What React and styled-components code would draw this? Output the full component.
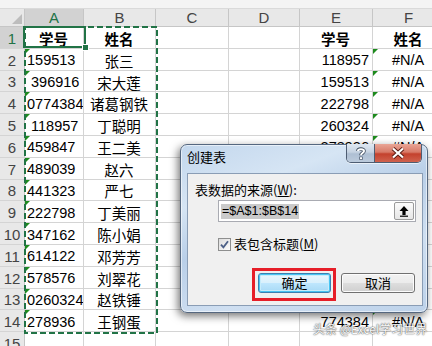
import React from "react";
import styled, { createGlobalStyle, css } from "styled-components";

const GlobalStyle = createGlobalStyle`
  html, body {
    margin: 0;
    padding: 0;
    background: #fff;
  }
  body {
    width: 432px;
    height: 346px;
    overflow: hidden;
    font-family: "Liberation Sans", "Noto Sans CJK SC", sans-serif;
  }
`;

const Page = styled.div`
  position: relative;
  width: 432px;
  height: 346px;
  overflow: hidden;
  background: #fff;
`;

const TopStrip = styled.div`
  height: 9px;
  background: #f4f4f4;
  border-bottom: 1px solid #dadada;
  box-sizing: border-box;
`;

const Sheet = styled.div`
  display: grid;
  grid-template-columns: 25px 59px 72px 73px 71px 73px 72px;
  grid-template-rows: 18px repeat(15, 21.8px);
  width: 445px;
`;

const Corner = styled.div`
  position: relative;
  background: #e8e8e8;
  border-right: 1px solid #c6c6c6;
  border-bottom: 1px solid #c6c6c6;
  &::after {
    content: "";
    position: absolute;
    right: 2px;
    bottom: 2px;
    border-left: 10px solid transparent;
    border-bottom: 10px solid #bdbdbd;
  }
`;

const ColHead = styled.div`
  display: flex;
  align-items: center;
  justify-content: center;
  box-sizing: border-box;
  font-size: 15px;
  background: ${(p) => (p.$active ? "#d2d2d2" : "#e8e8e8")};
  color: ${(p) => (p.$active ? "#217346" : "#444")};
  border-right: 1px solid #c6c6c6;
  border-bottom: 1px solid #c6c6c6;
`;

const RowHead = styled.div`
  display: flex;
  align-items: center;
  justify-content: center;
  box-sizing: border-box;
  font-size: 15px;
  padding-top: 2px;
  background: ${(p) => (p.$active ? "#d2d2d2" : "#e8e8e8")};
  color: ${(p) => (p.$active ? "#217346" : "#444")};
  border-right: 1px solid #c6c6c6;
  border-bottom: 1px solid #d4d4d4;
`;

const Cell = styled.div`
  position: relative;
  display: flex;
  align-items: center;
  box-sizing: border-box;
  padding: 2px 3px 0 2px;
  white-space: pre;
  overflow: hidden;
  font-size: 14.5px;
  color: #000;
  border-right: 1px solid #d4d4d4;
  border-bottom: 1px solid #d4d4d4;
  justify-content: ${(p) =>
    p.$align === "right" ? "flex-end" : p.$align === "center" ? "center" : "flex-start"};
  font-weight: ${(p) => (p.$bold ? 700 : 400)};
  ${(p) =>
    p.$flag &&
    css`
      &::before {
        content: "";
        position: absolute;
        top: 0;
        left: 0;
        border-top: 5px solid #1d8a1d;
        border-right: 5px solid transparent;
      }
    `}
`;

const Marquee = styled.svg`
  position: absolute;
  left: 24px;
  top: 26px;
  width: 134px;
  height: 308px;
`;

const ActiveCell = styled.div`
  position: absolute;
  left: 23px;
  top: 26px;
  width: 63px;
  height: 22px;
  box-sizing: border-box;
  border: 2px solid #217346;
  &::after {
    content: "";
    position: absolute;
    right: -5px;
    bottom: -5px;
    width: 5px;
    height: 5px;
    background: #217346;
    border: 1px solid #fff;
  }
`;

/* ---- dialog ---- */

const Dialog = styled.div`
  position: absolute;
  left: 180px;
  top: 144px;
  width: 248px;
  height: 169px;
  box-sizing: border-box;
  border: 1px solid #55677f;
  border-radius: 7px;
  background: linear-gradient(
    160deg,
    #c3d7ed 0%,
    #d6e5f4 25%,
    #b9cfe8 45%,
    #cfdff1 70%,
    #bdd2ea 100%
  );
  box-shadow: inset 0 0 0 1px rgba(255, 255, 255, 0.55),
    -2px 3px 8px rgba(0, 0, 0, 0.55);
  display: flex;
  flex-direction: column;
  font-family: "Noto Sans CJK SC", "Liberation Sans", sans-serif;
`;

const TitleBar = styled.div`
  height: 28px;
  display: flex;
  justify-content: space-between;
  align-items: flex-start;
  padding: 0 5px 0 6px;
`;

const Title = styled.div`
  margin-top: 3px;
  font-size: 13px;
  line-height: 18px;
  color: #000;
`;

const CaptionButtons = styled.div`
  display: flex;
  margin-top: -1px;
  border: 1px solid #4e5d72;
  border-top: none;
  border-radius: 0 0 5px 5px;
  overflow: hidden;
  box-shadow: 0 1px 0 rgba(255, 255, 255, 0.6);
`;

const CaptionButton = styled.div`
  height: 18px;
  width: ${(p) => (p.$close ? "47px" : "27px")};
  display: flex;
  align-items: center;
  justify-content: center;
  box-sizing: border-box;
  border-left: ${(p) => (p.$close ? "1px solid #4e5d72" : "none")};
  background: ${(p) =>
    p.$close
      ? "linear-gradient(#e9a596 0%, #d87a68 45%, #c4412d 55%, #d0624e 100%)"
      : "linear-gradient(#dfe8f2 0%, #c6d3e2 45%, #aebfd3 55%, #bccbdc 100%)"};
`;

const Client = styled.div`
  height: 133px;
  margin: 0 4px 0 6px;
  box-sizing: border-box;
  border: 1px solid #8a9db5;
  background: #f0f0f0;
  padding: 0 6px 0 7px;
  font-size: 13px;
  color: #000;
`;

const FieldLabel = styled.div`
  margin-top: 7px;
  line-height: 18px;
`;

const Key = styled.span`
  text-decoration: underline;
`;

const RefInput = styled.div`
  margin: 1px 0 0 23px;
  width: 198px;
  height: 22px;
  box-sizing: border-box;
  border: 1px solid #a9abb2;
  background: #fff;
  display: flex;
  align-items: center;
  justify-content: space-between;
  padding: 0 1px 0 2px;
`;

const Selected = styled.span`
  background: #cacaca;
  font-family: "Liberation Sans", sans-serif;
  font-size: 12.5px;
  line-height: 15px;
  padding: 0 1px;
  color: #000;
`;

const CollapseButton = styled.div`
  width: 20px;
  height: 18px;
  box-sizing: border-box;
  border: 1px solid #9a9a9a;
  border-radius: 2px;
  background: linear-gradient(#fbfbfb, #e6e6e6);
  display: flex;
  align-items: center;
  justify-content: center;
`;

const CheckRow = styled.div`
  margin: 13px 0 0 23px;
  height: 18px;
  display: flex;
  align-items: center;
`;

const CheckBox = styled.div`
  width: 13px;
  height: 13px;
  box-sizing: border-box;
  border: 1px solid #8e8f8f;
  background: linear-gradient(135deg, #dcdcdc, #fbfbfb);
  display: flex;
  align-items: center;
  justify-content: center;
`;

const CheckLabel = styled.span`
  margin-left: 3px;
  line-height: 18px;
`;

const ButtonRow = styled.div`
  margin: 15px 0 0 57px;
  display: flex;
  align-items: flex-start;
`;

const Highlight = styled.div`
  border: 3px solid #e61e28;
  padding: 2px 2px 5px 3px;
`;

const PushButton = styled.div`
  width: ${(p) => p.$w}px;
  height: 20px;
  box-sizing: border-box;
  margin-top: ${(p) => (p.$focus ? 0 : 5)}px;
  margin-left: ${(p) => (p.$focus ? 0 : 5)}px;
  border: 1px solid ${(p) => (p.$focus ? "#3c7fb1" : "#707070")};
  border-radius: 3px;
  background: ${(p) =>
    p.$focus
      ? "linear-gradient(#eaf6fd 0%, #d9f0fc 48%, #bee6fd 52%, #a7d9f5 100%)"
      : "linear-gradient(#f2f2f2 0%, #ebebeb 48%, #dddddd 52%, #cfcfcf 100%)"};
  box-shadow: ${(p) =>
    p.$focus
      ? "inset 0 0 0 1px #48c4f2, inset 0 0 0 2px #c7ecfb"
      : "inset 0 0 0 1px #fcfcfc"};
  display: flex;
  align-items: center;
  justify-content: center;
  font-size: 13px;
  line-height: 18px;
`;

const Watermark = styled.div`
  position: absolute;
  left: 313px;
  top: 321px;
  font-family: "Noto Sans CJK SC", sans-serif;
  font-size: 12px;
  line-height: 16px;
  color: #fafafa;
  text-shadow: 0 0 1px #444, 0 0 2px rgba(0, 0, 0, 0.55);
  white-space: nowrap;
`;

const cols = ["A", "B", "C", "D", "E", "F"];

const rows = [
  ["学号", "姓名", "学号", "姓名"],
  ["159513", "张三", "118957", "#N/A"],
  [" 396916", "宋大莲", "159513", "#N/A"],
  ["0774384", "诸葛钢铁", "222798", "#N/A"],
  [" 118957", "丁聪明", "260324", "#N/A"],
  ["459847", "王二美", "278936", "#N/A"],
  ["489039", "赵六", "347162", "#N/A"],
  ["441323", "严七", "396916", "#N/A"],
  ["222798", "丁美丽", "441323", "#N/A"],
  ["347162", "陈小娟", "459847", "#N/A"],
  ["614122", "邓芳芳", "489039", "#N/A"],
  ["578576", "刘翠花", "578576", "#N/A"],
  ["0260324", "赵铁锤", "614122", "#N/A"],
  ["278936", "王钢蛋", "774384", "#N/A"],
  ["", "", "", ""],
];

function SheetGrid() {
  return (
    <Sheet>
      <Corner />
      {cols.map((c) => (
        <ColHead key={c} $active={c === "A"}>
          {c}
        </ColHead>
      ))}
      {rows.map((r, i) => {
        const head = i === 0;
        const data = i > 0 && r[0] !== "";
        return (
          <React.Fragment key={i}>
            <RowHead $active={i === 0}>{i + 1}</RowHead>
            <Cell $align={head ? "center" : "left"} $bold={head} $flag={data}>
              {r[0]}
            </Cell>
            <Cell $align="center" $bold={head}>
              {r[1]}
            </Cell>
            <Cell />
            <Cell />
            <Cell $align={head ? "center" : "right"} $bold={head}>
              {r[2]}
            </Cell>
            <Cell $align="center" $bold={head} $flag={data}>
              {r[3]}
            </Cell>
          </React.Fragment>
        );
      })}
    </Sheet>
  );
}

function CreateTableDialog() {
  return (
    <Dialog>
      <TitleBar>
        <Title>创建表</Title>
        <CaptionButtons>
          <CaptionButton>
            <svg width="10" height="13" viewBox="0 0 10 13">
              <path
                d="M2 4 C2 1.5 8 1.5 8 4 C8 6 5 6 5 8.2"
                fill="none"
                stroke="#3c4a5c"
                strokeWidth="3.6"
              />
              <path
                d="M2 4 C2 1.5 8 1.5 8 4 C8 6 5 6 5 8.2"
                fill="none"
                stroke="#fff"
                strokeWidth="2"
              />
              <rect x="3.4" y="9.6" width="3.2" height="3.2" fill="#3c4a5c" />
              <rect x="4" y="10.2" width="2" height="2" fill="#fff" />
            </svg>
          </CaptionButton>
          <CaptionButton $close>
            <svg width="14" height="12" viewBox="0 0 14 12">
              <path d="M2 1.5 L12 10.5 M12 1.5 L2 10.5" stroke="#5a1c14" strokeWidth="4" />
              <path d="M2 1.5 L12 10.5 M12 1.5 L2 10.5" stroke="#fff" strokeWidth="2.2" />
            </svg>
          </CaptionButton>
        </CaptionButtons>
      </TitleBar>
      <Client>
        <FieldLabel>
          表数据的来源(<Key>W</Key>):
        </FieldLabel>
        <RefInput>
          <Selected>=$A$1:$B$14</Selected>
          <CollapseButton>
            <svg width="12" height="12" viewBox="0 0 12 12">
              <path d="M6 1 L10.5 6 L7.6 6 L7.6 10 L4.4 10 L4.4 6 L1.5 6 Z" fill="#000" />
              <rect x="2" y="10.6" width="8" height="1.2" fill="#000" />
            </svg>
          </CollapseButton>
        </RefInput>
        <CheckRow>
          <CheckBox>
            <svg width="9" height="9" viewBox="0 0 9 9">
              <path
                d="M1 4.6 L3.4 7.4 L8 1.2"
                fill="none"
                stroke="#4b5f86"
                strokeWidth="1.8"
              />
            </svg>
          </CheckBox>
          <CheckLabel>
            表包含标题(<Key>M</Key>)
          </CheckLabel>
        </CheckRow>
        <ButtonRow>
          <Highlight>
            <PushButton $w={73} $focus>
              确定
            </PushButton>
          </Highlight>
          <PushButton $w={74}>取消</PushButton>
        </ButtonRow>
      </Client>
    </Dialog>
  );
}

export default function App() {
  return (
    <Page>
      <GlobalStyle />
      <TopStrip />
      <SheetGrid />
      <Marquee viewBox="0 0 134 308">
        <rect
          x="1"
          y="1"
          width="132"
          height="306"
          fill="none"
          stroke="#217346"
          strokeWidth="2"
          strokeDasharray="6 3"
        />
      </Marquee>
      <ActiveCell />
      <CreateTableDialog />
      <Watermark>头条 @Excel学习世界</Watermark>
    </Page>
  );
}
